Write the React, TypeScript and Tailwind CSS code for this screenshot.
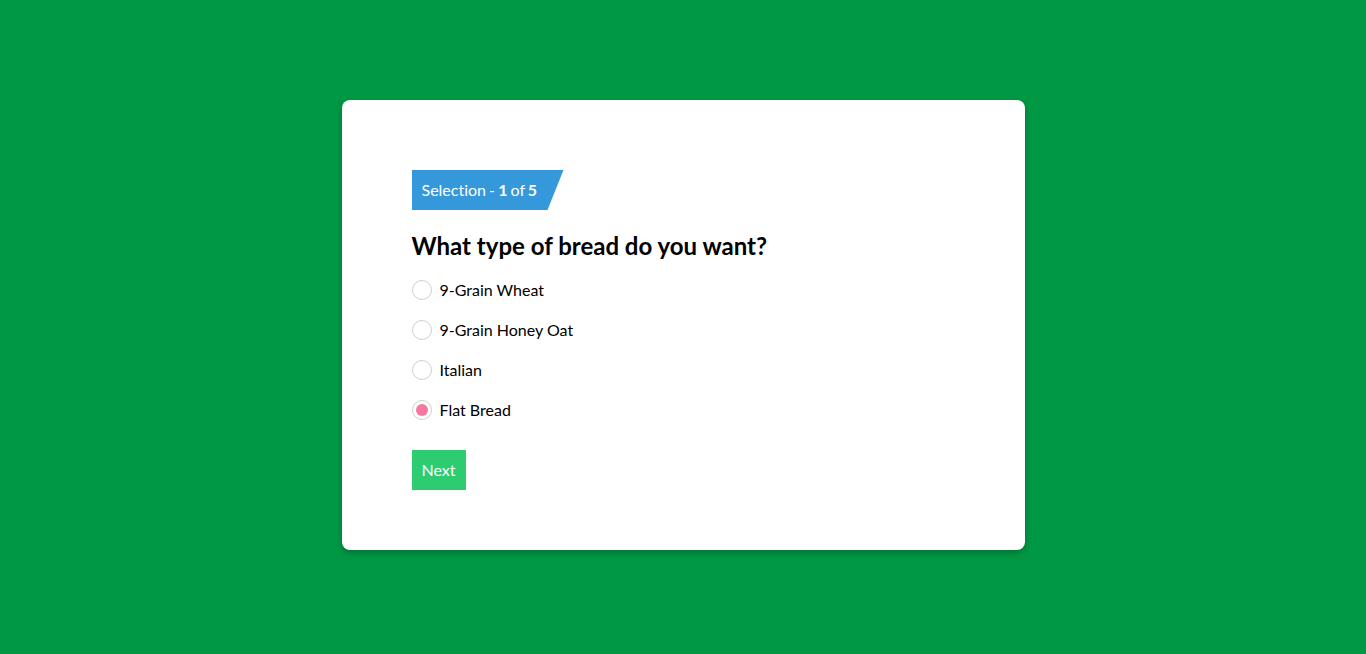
import React, { useState } from "react";

const options = ["9-Grain Wheat", "9-Grain Honey Oat", "Italian", "Flat Bread"];

export default function App() {
  const [sel, setSel] = useState(3);
  return (
    <div
      className="w-full h-[654px] bg-[#009844] flex justify-center pt-[100px] [font-variant-ligatures:none]"
      style={{ fontFamily: "Lato, 'Open Sans', sans-serif" }}
    >
      <div className="w-[683px] h-[450px] bg-white rounded-[8px] shadow-[0_3px_6px_rgba(0,0,0,0.25)] px-[70px] pt-[70px]">
        <div
          className="inline-flex items-center h-[40px] w-[152px] pl-[10px] bg-[#3498db] text-white text-[16px] [word-spacing:-1px]"
          style={{ clipPath: "polygon(0 0, 100% 0, calc(100% - 16px) 100%, 0 100%)" }}
        >
          <span>
            Selection - <b>1</b> of <b>5</b>
          </span>
        </div>
        <h1 className="mt-[20px] text-[24px] leading-[32px] font-bold text-black">
          What type of bread do you want?
        </h1>
        <div className="mt-[8px] flex flex-col">
          {options.map((o, i) => (
            <label
              key={o}
              className="h-[40px] flex items-center cursor-pointer"
              onClick={() => setSel(i)}
            >
              <span className="w-[20px] h-[20px] rounded-full border border-[#cfcfcf] flex items-center justify-center bg-white">
                {sel === i && <span className="w-[12px] h-[12px] rounded-full bg-[#f5799f]" />}
              </span>
              <span className="ml-[8px] text-[16px] text-black">{o}</span>
            </label>
          ))}
        </div>
        <button className="mt-[20px] h-[40px] w-[54px] bg-[#2ecc71] text-white text-[16px] flex items-center justify-center">
          Next
        </button>
      </div>
    </div>
  );
}
